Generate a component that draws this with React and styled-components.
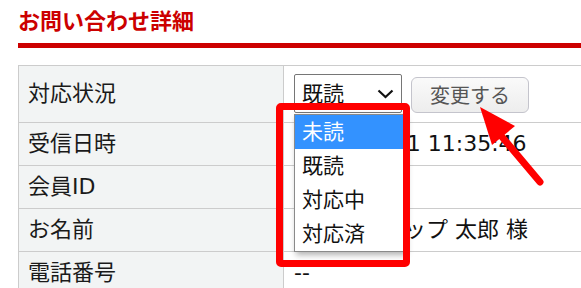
import React from 'react';
import styled, { createGlobalStyle } from 'styled-components';

const GlobalStyle = createGlobalStyle`
    html, body {
        margin: 0;
        padding: 0;
        background: #fff;
        overflow: hidden;
    }
    body {
        font-family: "DejaVu Sans", "Noto Sans CJK JP", sans-serif;
    }
`;

const Page = styled.div`
    position: relative;
    width: 581px;
    height: 288px;
    padding-left: 18px;
    box-sizing: border-box;
    overflow: hidden;
`;

const Title = styled.h2`
    margin: 4px 0 17px;
    padding-bottom: 9px;
    border-bottom: 5px solid #cc0000;
    font-family: "Noto Sans CJK JP", sans-serif;
    font-size: 22px;
    line-height: 30px;
    font-weight: 700;
    color: #cc0000;
`;

const Table = styled.table`
    width: 640px;
    table-layout: fixed;
    border-collapse: collapse;
    font-size: 22px;
    line-height: 26px;
    color: #111;
`;

const Label = styled.th`
    box-sizing: border-box;
    width: 265px;
    padding: 8px 9px;
    text-align: left;
    font-weight: 400;
    background: #f2f4f4;
    border: 1px solid #cccccc;
    color: #1a1a1a;
`;

const Value = styled.td`
    padding: ${props => props.tight ? '8px 10px 9px' : '8px 10px'};
    border: 1px solid #cccccc;
    white-space: nowrap;
`;

const Controls = styled.div`
    display: flex;
    align-items: flex-start;
    gap: 9px;
    position: relative;
`;

const SelectBox = styled.div`
    box-sizing: border-box;
    width: 108px;
    height: 39px;
    border: 1px solid #767676;
    border-radius: 2px;
    background: #fff;
    display: flex;
    align-items: center;
    justify-content: space-between;
    padding: 0 7px 0 7px;
    font-size: 21px;
`;

const ChangeButton = styled.div`
    box-sizing: border-box;
    margin-top: 3px;
    height: 36px;
    padding: 0 18px;
    border: 1px solid #c4c4cc;
    border-radius: 6px;
    background: linear-gradient(#fafafa, #ededed);
    color: #555;
    font-family: "Noto Sans CJK JP", sans-serif;
    font-size: 20px;
    line-height: 34px;
`;

const Dropdown = styled.ul`
    position: absolute;
    top: 40px;
    left: 0;
    width: 109px;
    margin: 0;
    padding: 0;
    list-style: none;
    background: #fff;
    border: 1px solid #8a8a8a;
    box-shadow: 2px 3px 6px rgba(0, 0, 0, 0.3);
    z-index: 2;
`;

const Option = styled.li`
    height: 34px;
    line-height: 34px;
    padding-left: 7px;
    font-size: 21px;
    background: ${props => props.active ? '#3392ff' : '#fff'};
    color: ${props => props.active ? '#fff' : '#111'};
`;

const Highlight = styled.div`
    position: absolute;
    left: 276px;
    top: 103px;
    width: 134px;
    height: 164px;
    box-sizing: border-box;
    border: 7px solid #ff0000;
    border-radius: 5px;
    z-index: 3;
`;

const Arrow = styled.svg`
    position: absolute;
    left: 470px;
    top: 100px;
    z-index: 3;
`;

const options = ['未読', '既読', '対応中', '対応済'];

const App = () => {
    return (
        <Page>
            <GlobalStyle />
            <Title>お問い合わせ詳細</Title>
            <Table>
                <tbody>
                    <tr>
                        <Label>対応状況</Label>
                        <Value tight>
                            <Controls>
                                <SelectBox>
                                    既読
                                    <svg width="17" height="10" viewBox="0 0 17 10">
                                        <path d="M1.5 1.5 L8.5 8 L15.5 1.5" fill="none" stroke="#111" strokeWidth="2.2" />
                                    </svg>
                                </SelectBox>
                                <ChangeButton>変更する</ChangeButton>
                                <Dropdown>
                                    {options.map((o, i) => (
                                        <Option key={o} active={i === 0}>{o}</Option>
                                    ))}
                                </Dropdown>
                            </Controls>
                        </Value>
                    </tr>
                    <tr>
                        <Label>受信日時</Label>
                        <Value>2021/06/21 11:35:46</Value>
                    </tr>
                    <tr>
                        <Label>会員ID</Label>
                        <Value>1024</Value>
                    </tr>
                    <tr>
                        <Label>お名前</Label>
                        <Value>テストショップ 太郎 様</Value>
                    </tr>
                    <tr>
                        <Label>電話番号</Label>
                        <Value>--</Value>
                    </tr>
                </tbody>
            </Table>
            <Highlight />
            <Arrow width="80" height="90" viewBox="0 0 80 90">
                <line x1="22" y1="25" x2="70" y2="82" stroke="#ff0000" strokeWidth="7" strokeLinecap="round" />
                <polygon points="10,7 45,26 22,45" fill="#ff0000" />
            </Arrow>
        </Page>
    );
};

export default App;
